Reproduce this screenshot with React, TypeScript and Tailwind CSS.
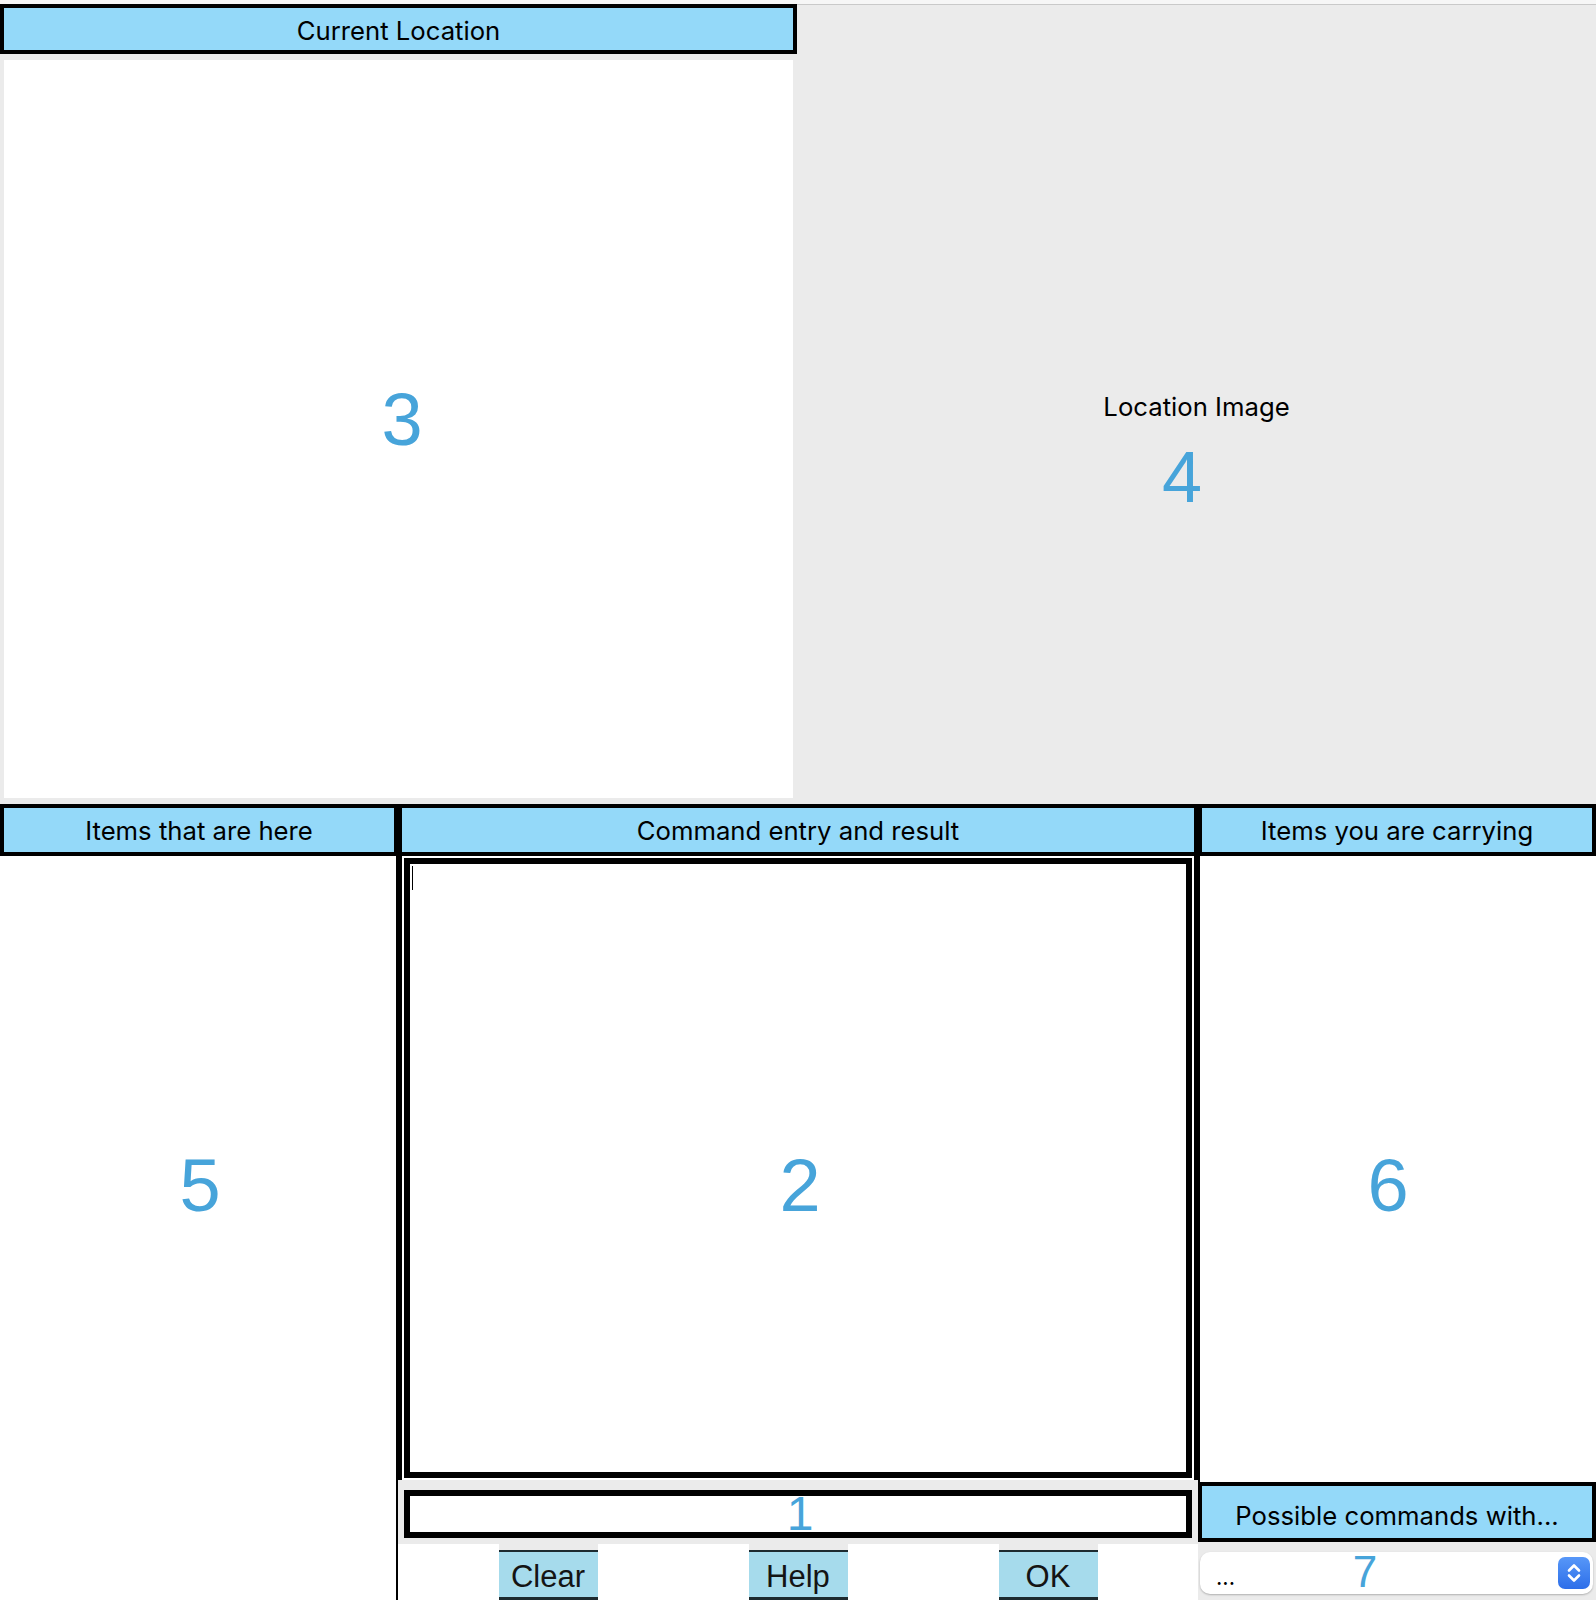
import React from "react";

const headerCls =
  "border-4 border-black bg-[#94d9f9] flex items-center justify-center text-[25.7px] text-black font-['Inter','Noto_Sans',sans-serif]";

// annotation numbers drawn over the panels
const labels = [
  { text: "3", cls: "left-[402px] top-[420px] text-[74px]" },
  { text: "4", cls: "left-[1182px] top-[477px] text-[72px]" },
  { text: "5", cls: "left-[200px] top-[1186px] text-[74px]" },
  { text: "2", cls: "left-[800px] top-[1186px] text-[74px]" },
  { text: "6", cls: "left-[1388px] top-[1186px] text-[74px]" },
  { text: "7", cls: "left-[1365px] top-[1572px] text-[44px]" },
];

function PanelButton({ label }: { label: string }) {
  return (
    <div className="w-[99px] h-[56px] flex flex-col">
      <div className="h-[6px] bg-[#ebebeb]" />
      <div className="flex-1 bg-[#a6dbec] border-t-2 border-b-[3px] border-[#1d2a2f] flex items-center justify-center pt-[4px] text-[31px] leading-none text-[#141414] font-['Liberation_Sans',Arial,sans-serif]">
        {label}
      </div>
    </div>
  );
}

function Stepper() {
  return (
    <div className="w-[32px] h-[32px] rounded-[7px] bg-gradient-to-b from-[#5797f8] to-[#2d6ee9] flex items-center justify-center">
      <svg width="18" height="24" viewBox="0 0 18 24" fill="none">
        <path d="M4 9.5 L9 4.5 L14 9.5" stroke="white" strokeWidth="2.6" strokeLinecap="round" strokeLinejoin="round" />
        <path d="M4 14.5 L9 19.5 L14 14.5" stroke="white" strokeWidth="2.6" strokeLinecap="round" strokeLinejoin="round" />
      </svg>
    </div>
  );
}

export default function App() {
  return (
    <div className="relative w-[1596px] h-[1600px] overflow-hidden bg-[#ebebeb]">
      <div className="h-[4px] bg-[#f6f6f6]" />

      {/* top row */}
      <div className="flex h-[800px]">
        <div className="w-[797px] flex flex-col">
          <div className={`${headerCls} h-[50px] pt-[4px]`}>Current Location</div>
          <div className="mt-[6px] mx-[4px] h-[738px] bg-white" />
        </div>
        <div className="flex-1 border-t border-[#c9c9c9] flex items-center justify-center">
          <span className="mt-[6px] text-[25.7px] text-black font-['Inter','Noto_Sans',sans-serif]">
            Location Image
          </span>
        </div>
      </div>

      {/* bottom row */}
      <div className="flex h-[796px]">
        {/* items here */}
        <div className="w-[398px] flex flex-col">
          <div className={`${headerCls} h-[52px] pt-[2px]`}>Items that are here</div>
          <div className="flex-1 bg-white border-r-2 border-black" />
        </div>

        {/* command entry */}
        <div className="w-[800px] flex flex-col">
          <div className={`${headerCls} h-[52px] pt-[2px]`}>Command entry and result</div>
          <div className="h-[624px] bg-white border-x-4 border-black p-[2px]">
            <div className="h-full border-[6px] border-black bg-white pl-[2px] pt-[2px]">
              <div className="w-[1px] h-[24px] bg-black" />
            </div>
          </div>
          <div className="h-[64px] bg-[#ebebeb] px-[6px] pt-[10px] pb-[6px]">
            <div className="h-full border-[6px] border-black bg-white flex justify-center items-start">
              <span className="ml-[4px] text-[48px] leading-[36px] text-[#47a4da] font-['Liberation_Sans',Arial,sans-serif]">
                1
              </span>
            </div>
          </div>
          <div className="flex-1 bg-white flex justify-center gap-[151px]">
            <PanelButton label="Clear" />
            <PanelButton label="Help" />
            <PanelButton label="OK" />
          </div>
        </div>

        {/* carrying */}
        <div className="w-[398px] flex flex-col">
          <div className={`${headerCls} h-[52px] pt-[2px]`}>Items you are carrying</div>
          <div className="h-[626px] bg-white border-l-2 border-black" />
          <div className={`${headerCls} h-[60px] pt-[9px]`}>Possible commands with...</div>
          <div className="flex-1 bg-[#ebebeb] pl-[2px] pr-[3px] pt-[10px] pb-[6px]">
            <div className="h-full bg-white rounded-[10px] shadow-[0_1px_2px_rgba(0,0,0,0.25)] flex items-center justify-between pl-[16px] pr-[3px]">
              <span className="mt-[8px] text-[22px] leading-none text-black font-['Inter','Noto_Sans',sans-serif]">
                ...
              </span>
              <Stepper />
            </div>
          </div>
        </div>
      </div>

      {labels.map((l) => (
        <span
          key={l.text}
          className={`absolute -translate-x-1/2 -translate-y-1/2 leading-none text-[#47a4da] font-['Liberation_Sans',Arial,sans-serif] ${l.cls}`}
        >
          {l.text}
        </span>
      ))}
    </div>
  );
}
